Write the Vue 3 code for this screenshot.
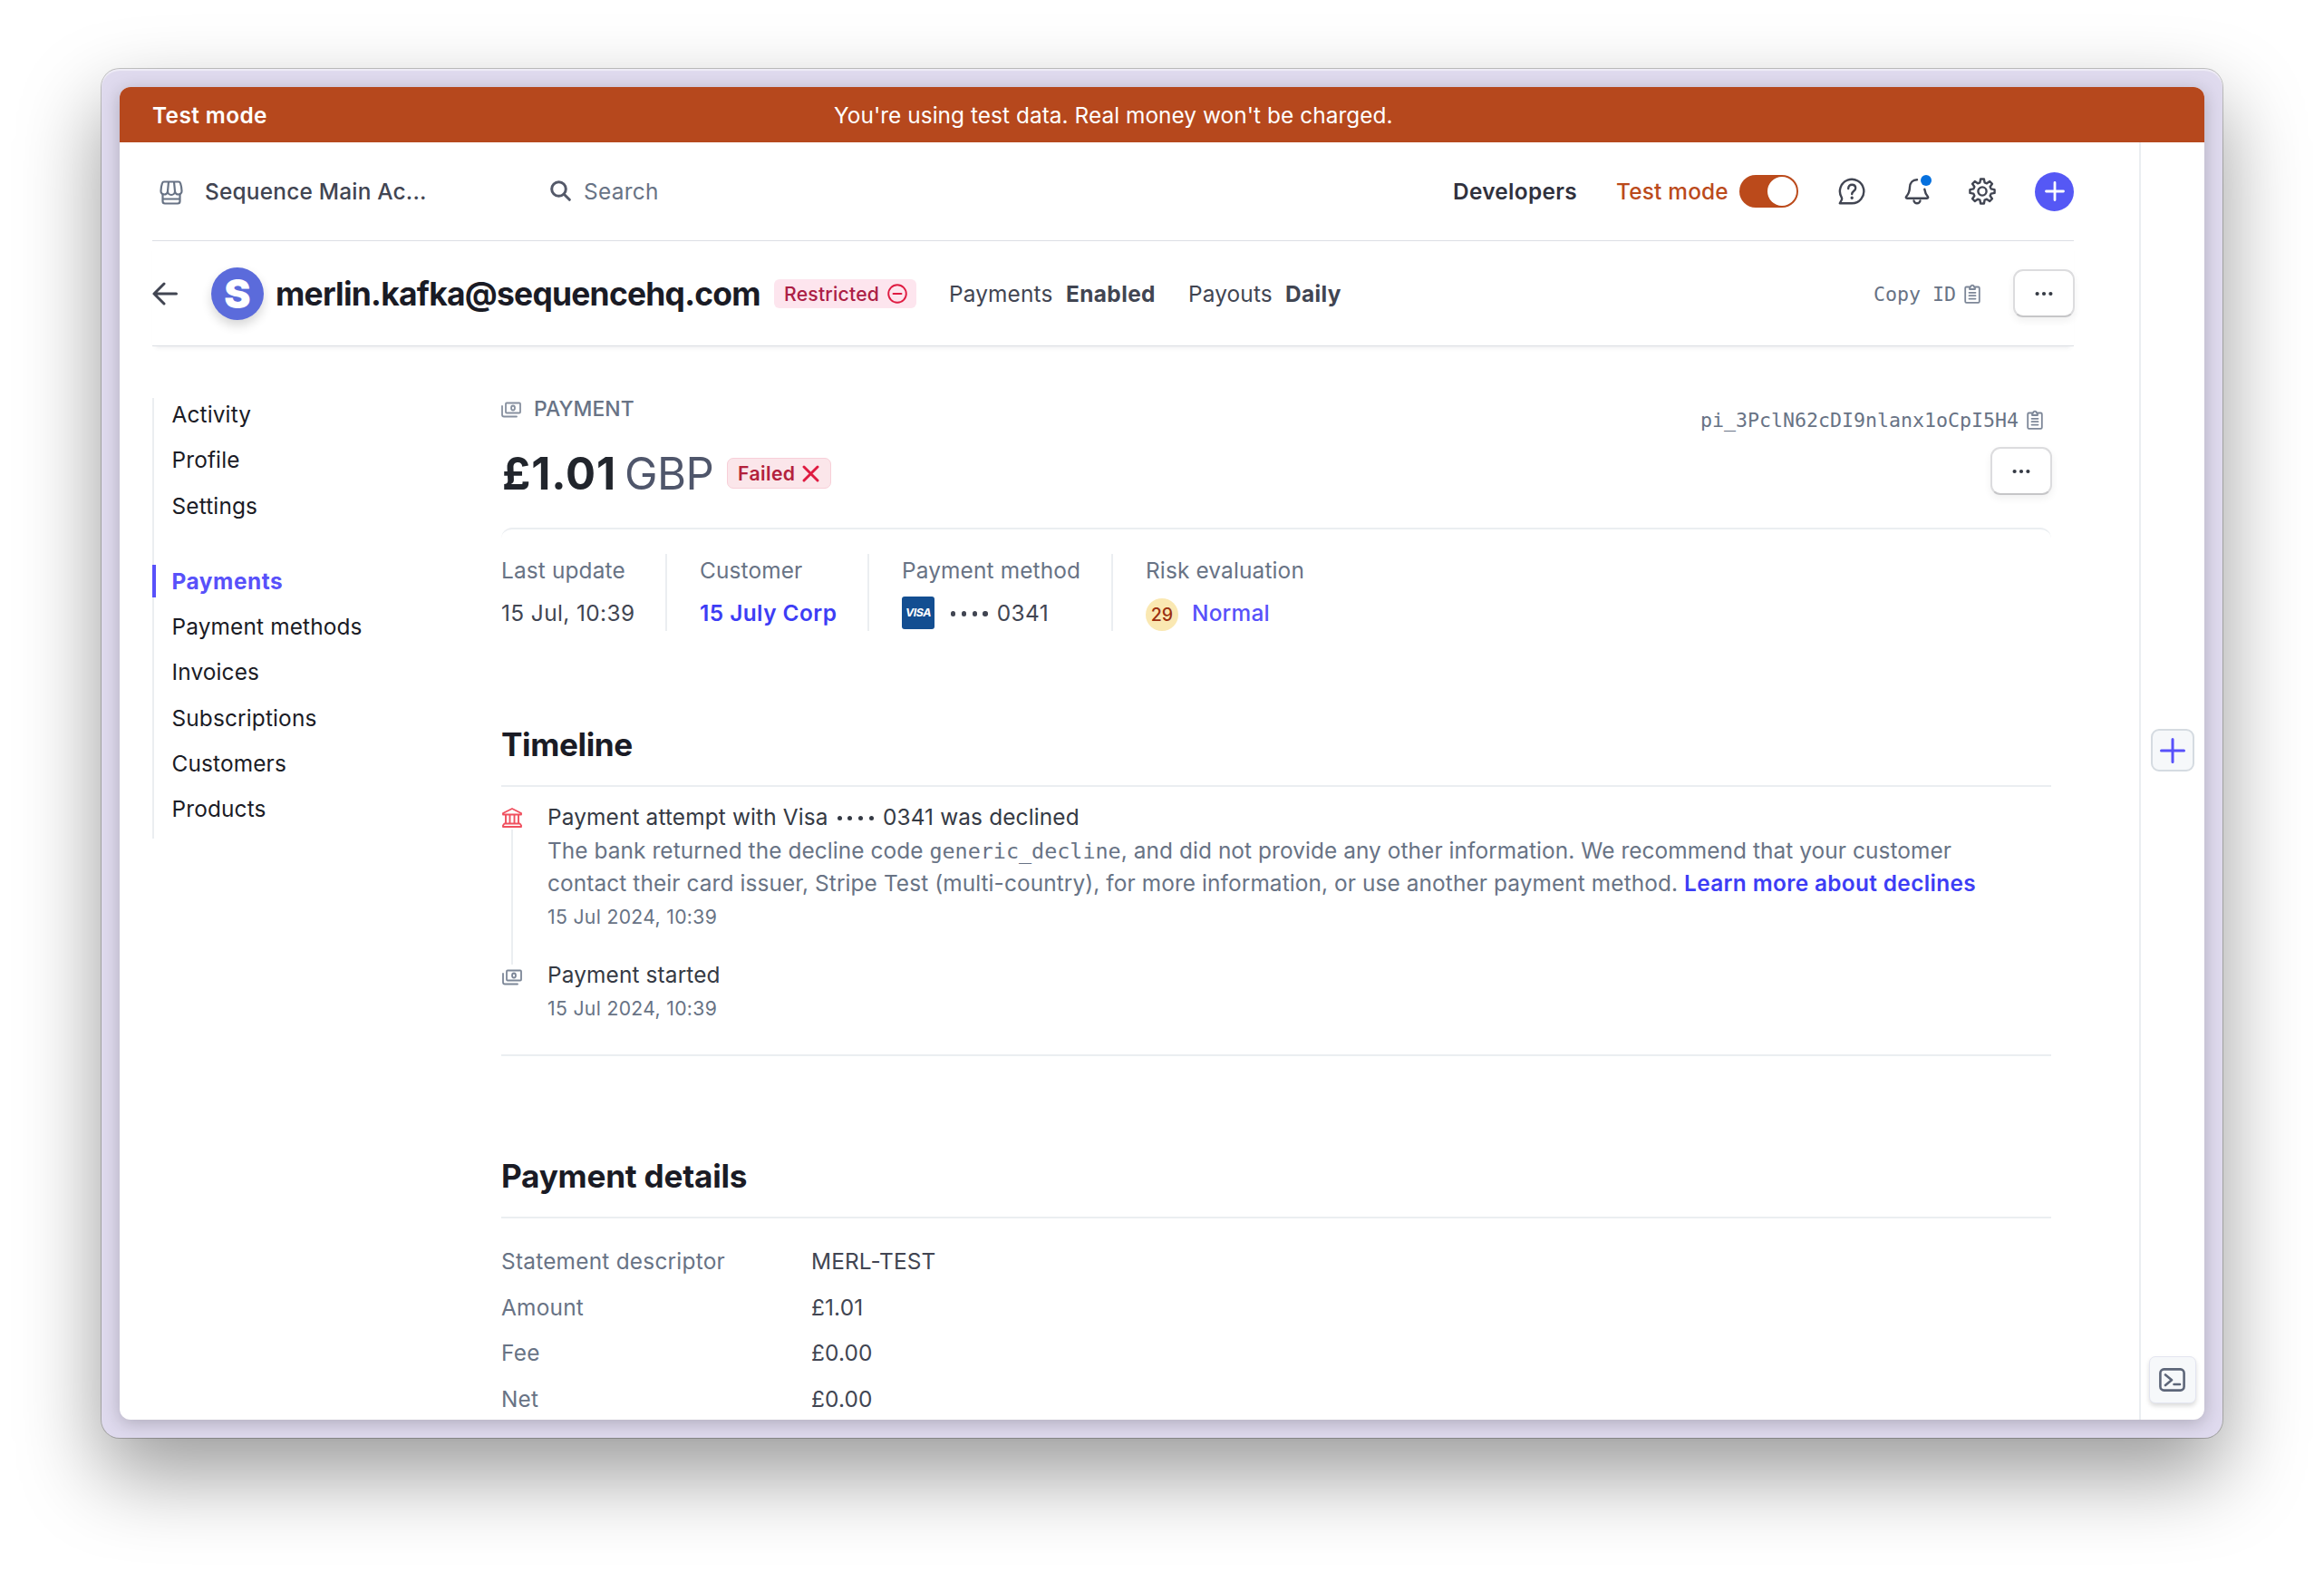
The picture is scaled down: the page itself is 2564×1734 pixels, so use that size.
<template>
  <div class="desktop">
    <div class="frame">
      <div class="window">
        <div class="banner">
          <span class="banner-mode">Test mode</span>
          <span class="banner-text">You're using test data. Real money won't be charged.</span>
        </div>

        <div class="body">
          <div class="page">
            <header class="topbar">
              <svg class="store-icon" viewBox="0 0 26 28" fill="none" stroke="#687385" stroke-width="2.2" stroke-linejoin="round">
                <path d="M5 2.500h16c1 0 1.700.500 2 1.500 1 3 1.500 6 1.500 8.500a3.500 3.500 0 0 1-7.500.500 4 4 0 0 1-8 0 3.500 3.500 0 0 1-7.500-.500C1.500 10 2 7 3 4c.3-1 1-1.500 2-1.500z" />
                <path d="M10 2.500L9 13M16 2.500L17 13" />
                <path d="M3.500 15.500V24a2.500 2.500 0 0 0 2.500 2.500h14a2.500 2.500 0 0 0 2.500-2.500v-8.500M3.500 21.500h19" />
              </svg>
              <span class="account">Sequence Main Ac...</span>
              <svg class="search-icon" viewBox="0 0 23 23" fill="none" stroke="#545969" stroke-width="3" stroke-linecap="round">
                <circle cx="9.500" cy="9.500" r="7.800" />
                <path d="M15.300 15.300l6 6" />
              </svg>
              <span class="search-text">Search</span>
              <span class="developers">Developers</span>
              <span class="mode-label">Test mode</span>
              <span class="toggle"><span class="knob"></span></span>
              <svg class="top-icon" viewBox="0 0 30 30" fill="none" stroke="#414552" stroke-width="2.400" stroke-linecap="round" stroke-linejoin="round">
                <path d="M1.800 28.200h13.400A13.200 13.200 0 1 0 3.800 21.800c.5.900.4 1.700 0 2.700z" />
                <path d="M11.200 12c0-2.600 1.700-4.200 4-4.200s4 1.500 4 3.700c0 3.300-4 3.300-4 6.500" />
                <circle cx="15.200" cy="22.200" r="1" fill="#414552" stroke-width="1.400" />
              </svg>
              <span class="bell">
                <svg class="bell-icon" viewBox="0 0 30 30" fill="none" stroke="#414552" stroke-width="2.400" stroke-linecap="round" stroke-linejoin="round">
                  <path d="M15 2.200C10.200 2.200 7.200 5.800 7 10.500c-.2 5-1.300 7.500-3.800 10.200-.8 1-.4 2 .8 2h22c1.200 0 1.600-1 .8-2-2-2.200-3-4.700-3.500-8" />
                  <path d="M11.500 25.500c.5 1.800 1.800 2.800 3.500 2.800s3-1 3.500-2.800" />
                </svg>
                <span class="bell-dot"></span>
              </span>
              <svg class="top-icon gear" viewBox="0 0 30 30" fill="none" stroke="#414552" stroke-width="2.400" stroke-linejoin="round">
                <path :d="gearPath" />
                <circle cx="15" cy="15" r="4.600" />
              </svg>
              <span class="create">
                <svg viewBox="0 0 22 22" stroke="#fff" stroke-width="2.800" stroke-linecap="round"><path d="M11 1.500v19M1.500 11h19" /></svg>
              </span>
            </header>

            <div class="account-bar">
              <svg class="back" viewBox="0 0 28 26" fill="none" stroke="#414552" stroke-width="3" stroke-linecap="round" stroke-linejoin="round">
                <path d="M26.500 13H2M13 2L2 13l11 11" />
              </svg>
              <span class="avatar">S</span>
              <h1 class="email">merlin.kafka@sequencehq.com</h1>
              <span class="restricted">
                Restricted
                <svg viewBox="0 0 22 22" fill="none" stroke="#df1b41" stroke-width="1.900" stroke-linecap="round">
                  <circle cx="11" cy="11" r="9.800" /><path d="M6.500 11h9" />
                </svg>
              </span>
              <span class="fact payments">Payments</span>
              <b class="fact enabled">Enabled</b>
              <span class="fact payouts">Payouts</span>
              <b class="fact daily">Daily</b>
              <span class="copy-id">
                Copy ID
                <svg class="clipboard" viewBox="0 0 18 22" fill="none" stroke="#7d8798" stroke-width="1.800" stroke-linecap="round" stroke-linejoin="round">
                  <path d="M5 3.500H2.500A1.300 1.300 0 0 0 1.200 4.800v14.700a1.300 1.300 0 0 0 1.300 1.300h13a1.300 1.300 0 0 0 1.300-1.300V4.800a1.300 1.300 0 0 0-1.300-1.300H13" />
                  <path d="M6 3.500h1.200a1.800 1.800 0 0 1 3.600 0H12V6H6zM5.500 9.800h7M5.500 13.200h7M5.500 16.600h7" />
                </svg>
              </span>
              <button class="more">
                <svg viewBox="0 0 20 6" fill="#353a44"><circle cx="2.600" cy="3" r="2.100" /><circle cx="10" cy="3" r="2.100" /><circle cx="17.400" cy="3" r="2.100" /></svg>
              </button>
            </div>

            <div class="columns">
              <nav class="sidebar">
                <ul v-for="(group, index) in navGroups" :key="index">
                  <li v-for="item in group" :key="item" :class="{ active: item === current }">
                    <span>{{ item }}</span>
                  </li>
                </ul>
              </nav>

              <main class="content">
                <div class="summary">
                  <div class="summary-left">
                    <div class="kind">
                      <svg class="cash" viewBox="0 0 22 18" fill="none" stroke="#87909f" stroke-width="1.800" stroke-linecap="round" stroke-linejoin="round">
                        <rect x="5" y="1.500" width="16" height="11" rx="1" />
                        <path d="M1 5v9.500a2 2 0 0 0 2 2h14" />
                        <ellipse cx="13" cy="7" rx="2" ry="2.500" />
                      </svg>
                      <span>PAYMENT</span>
                    </div>
                    <div class="amount-row">
                      <span class="amount">£1.01</span>
                      <span class="currency">GBP</span>
                      <span class="failed">
                        Failed
                        <svg viewBox="0 0 19 19" stroke="#df1b41" stroke-width="2.900" stroke-linecap="round"><path d="M2 2l15 15M17 2L2 17" /></svg>
                      </span>
                    </div>
                  </div>
                  <div class="summary-right">
                    <span class="payment-id">
                      pi_3PclN62cDI9nlanx1oCpI5H4
                      <svg class="clipboard" viewBox="0 0 18 22" fill="none" stroke="#7d8798" stroke-width="1.800" stroke-linecap="round" stroke-linejoin="round">
                        <path d="M5 3.500H2.500A1.300 1.300 0 0 0 1.200 4.800v14.700a1.300 1.300 0 0 0 1.300 1.300h13a1.300 1.300 0 0 0 1.300-1.300V4.800a1.300 1.300 0 0 0-1.300-1.300H13" />
                        <path d="M6 3.500h1.200a1.800 1.800 0 0 1 3.600 0H12V6H6zM5.500 9.800h7M5.500 13.200h7M5.500 16.600h7" />
                      </svg>
                    </span>
                    <button class="more">
                      <svg viewBox="0 0 20 6" fill="#353a44"><circle cx="2.600" cy="3" r="2.100" /><circle cx="10" cy="3" r="2.100" /><circle cx="17.400" cy="3" r="2.100" /></svg>
                    </button>
                  </div>
                </div>

                <div class="stats-edge"></div>
                <div class="stats">
                  <div class="stat">
                    <span class="label">Last update</span>
                    <span class="value"><span class="date-value">15 Jul, 10:39</span></span>
                  </div>
                  <div class="stat">
                    <span class="label">Customer</span>
                    <a class="value link customer">15 July Corp</a>
                  </div>
                  <div class="stat">
                    <span class="label">Payment method</span>
                    <span class="value">
                      <span class="visa">VISA</span>
                      <span class="dots"><i></i><i></i><i></i><i></i></span>
                      <span class="last4">0341</span>
                    </span>
                  </div>
                  <div class="stat">
                    <span class="label">Risk evaluation</span>
                    <span class="value">
                      <span class="risk">29</span>
                      <span class="normal">Normal</span>
                    </span>
                  </div>
                </div>

                <section class="timeline">
                  <h2>Timeline</h2>
                  <div class="event declined">
                    <div class="marker">
                      <svg class="bank" viewBox="0 0 22 22" fill="none" stroke="#f0505f" stroke-width="1.900" stroke-linejoin="round">
                        <path d="M1 7.500V6L11 1l10 5v1.500zM4 7.500v10M8.500 8v9.500M13.500 8v9.500M18 7.500v10M2.500 17.500h17M1 21h20v-1.500l-1.500-2h-17L1 19.500z" />
                      </svg>
                    </div>
                    <div class="event-body">
                      <div class="event-title attempt">Payment attempt with Visa <span class="dots small"><i></i><i></i><i></i><i></i></span> 0341 was declined</div>
                      <div class="event-text">The bank returned the decline code <code>generic_decline</code>, and did not provide any other information. We recommend that your customer</div>
                      <div class="event-text issuer">contact their card issuer, Stripe Test (multi-country), for more information, or use another payment method. <a class="link learn">Learn more about declines</a></div>
                      <div class="event-date">15 Jul 2024, 10:39</div>
                    </div>
                  </div>
                  <div class="event started">
                    <div class="marker">
                      <svg class="cash" viewBox="0 0 22 18" fill="none" stroke="#7d8798" stroke-width="1.800" stroke-linecap="round" stroke-linejoin="round">
                        <rect x="5" y="1.500" width="16" height="11" rx="1" />
                        <path d="M1 5v9.500a2 2 0 0 0 2 2h14" />
                        <ellipse cx="13" cy="7" rx="2" ry="2.500" />
                      </svg>
                    </div>
                    <div class="event-body">
                      <div class="event-title">Payment started</div>
                      <div class="event-date">15 Jul 2024, 10:39</div>
                    </div>
                  </div>
                </section>

                <section class="details">
                  <h2>Payment details</h2>
                  <dl>
                    <div v-for="row in details" :key="row.label" class="detail">
                      <dt>{{ row.label }}</dt>
                      <dd>{{ row.value }}</dd>
                    </div>
                  </dl>
                </section>
              </main>
            </div>
          </div>

          <aside class="rail">
            <button class="rail-add">
              <svg viewBox="0 0 28 28" stroke="#5851fa" stroke-width="3" stroke-linecap="round"><path d="M14 1.500v25M1.500 14h25" /></svg>
            </button>
            <button class="rail-shell">
              <svg viewBox="0 0 29 26" fill="none" stroke="#5d6679" stroke-width="2.600" stroke-linecap="round" stroke-linejoin="round">
                <rect x="1.400" y="1.400" width="26.200" height="23.200" rx="4" />
                <path d="M7 7.500l7 5.700L7 19M16.500 18h6.500" />
              </svg>
            </button>
          </aside>
        </div>
      </div>
    </div>
  </div>
</template>

<script setup>
import { ref } from 'vue'

const current = ref('Payments')

const navGroups = [
  ['Activity', 'Profile', 'Settings'],
  ['Payments', 'Payment methods', 'Invoices', 'Subscriptions', 'Customers', 'Products']
]

const details = [
  { label: 'Statement descriptor', value: 'MERL-TEST' },
  { label: 'Amount', value: '£1.01' },
  { label: 'Fee', value: '£0.00' },
  { label: 'Net', value: '£0.00' }
]

// eight teeth around the centre of a 30x30 box
function buildGear() {
  const points = []
  for (let i = 0; i < 8; i++) {
    const angle = i * 45
    const steps = [[-15, 10], [-8, 13.7], [8, 13.7], [15, 10]]
    steps.forEach(([offset, radius]) => {
      const rad = ((angle + offset) * Math.PI) / 180
      points.push(`${(15 + radius * Math.sin(rad)).toFixed(2)} ${(15 - radius * Math.cos(rad)).toFixed(2)}`)
    })
  }
  return `M${points.join('L')}Z`
}

const gearPath = buildGear()
</script>

<style>
body {
  margin: 0;
  background: #fff;
}
</style>

<style scoped>
.desktop {
  box-sizing: border-box;
  width: 2564px;
  height: 1734px;
  padding: 76px 112px 148px;
  overflow: hidden;
  background: #fff;
  font-family: Inter, "Liberation Sans", sans-serif;
  font-size: 24.4px;
  letter-spacing: 0.05px;
  color: #414552;
}

.desktop * {
  box-sizing: border-box;
}

.desktop svg {
  display: block;
  flex: none;
}

.frame {
  width: 2340px;
  height: 1510px;
  padding: 20px;
  border-radius: 20px;
  background: #dfdaee;
  box-shadow: 0 0 0 1px rgba(0, 0, 0, 0.22), 0 40px 90px rgba(0, 0, 0, 0.4), inset 0 2px 1px rgba(255, 255, 255, 0.5);
}

.window {
  display: flex;
  flex-direction: column;
  height: 1470px;
  overflow: hidden;
  border-radius: 12px;
  background: #fff;
  box-shadow: 0 4px 20px rgba(0, 0, 0, 0.22);
}

.banner {
  display: flex;
  flex: none;
  align-items: center;
  height: 61px;
  padding-left: 36px;
  background: #b6481d;
  color: #fff;
}

.banner-mode {
  width: 752px;
  font-weight: 600;
  letter-spacing: 0.4px;
}

.body {
  display: flex;
  flex: 1;
  min-height: 0;
}

.page {
  width: 2228px;
  padding: 0 72px 0 36px;
}

/* top bar */
.topbar {
  display: flex;
  align-items: center;
  height: 109px;
  border-bottom: 1px solid #dcdfe4;
  white-space: nowrap;
}

.store-icon {
  width: 26px;
  height: 28px;
  margin: 2px 0 0 8px;
}

.account {
  width: 381px;
  margin-left: 24px;
  font-weight: 550;
  letter-spacing: 0.22px;
}

.search-icon {
  width: 23px;
  height: 23px;
  margin: 0 14px 2px 0;
}

.search-text {
  width: 959px;
  letter-spacing: 0.3px;
  color: #687385;
}

.developers {
  width: 180px;
  font-weight: 570;
  letter-spacing: 0.3px;
  color: #30313d;
}

.mode-label {
  width: 136px;
  font-weight: 450;
  letter-spacing: 0.2px;
  color: #bb4a1b;
}

.toggle {
  width: 65px;
  height: 36px;
  padding: 2px;
  margin-right: 44px;
  border-radius: 18px;
  background: #bb4a1b;
}

.knob {
  display: block;
  width: 32px;
  height: 32px;
  margin-left: auto;
  border-radius: 50%;
  background: #fff;
}

.top-icon {
  width: 30px;
  height: 30px;
}

.bell {
  position: relative;
  width: 30px;
  height: 30px;
  margin-left: 42px;
}

.bell-icon {
  width: 30px;
  height: 30px;
}

.bell-dot {
  position: absolute;
  top: -3px;
  right: -1px;
  width: 12px;
  height: 12px;
  border-radius: 50%;
  background: #0570de;
}

.gear {
  margin: 0 43px 0 42px;
}

.create {
  display: flex;
  align-items: center;
  justify-content: center;
  width: 43px;
  height: 43px;
  border-radius: 50%;
  background: #5558f5;
}

.create svg {
  width: 22px;
  height: 22px;
}

/* connected account bar */
.account-bar {
  display: flex;
  align-items: center;
  height: 116px;
  border-bottom: 1px solid #dcdfe4;
  box-shadow: 0 5px 5px -4px rgba(60, 66, 87, 0.12);
  white-space: nowrap;
}

.back {
  width: 28px;
  height: 26px;
}

.avatar {
  display: flex;
  align-items: center;
  justify-content: center;
  width: 58px;
  height: 58px;
  margin-left: 37px;
  border-radius: 50%;
  background: #5b6bdb;
  box-shadow: 0 6px 12px rgba(0, 0, 0, 0.16);
  color: #fff;
  font-size: 44px;
  font-weight: 900;
}

.email {
  width: 550px;
  margin: 1px 0 0 13px;
  font-size: 35.4px;
  font-weight: 700;
  letter-spacing: -0.74px;
  color: #1a1b25;
}

.restricted {
  display: flex;
  align-items: center;
  justify-content: space-between;
  width: 157px;
  height: 32px;
  padding: 0 10px 0 11px;
  border-radius: 6px;
  background: #fde5ee;
  font-size: 21.2px;
  font-weight: 500;
  letter-spacing: 0.2px;
  color: #ac2045;
}

.restricted svg {
  width: 22px;
  height: 22px;
}

.fact {
  letter-spacing: 0.15px;
}

.fact.payments {
  width: 128px;
  margin-left: 36px;
}

.fact.enabled {
  width: 135px;
  margin-left: 1px;
  letter-spacing: 0.4px;
}

.fact.payouts {
  width: 106px;
}

.fact.daily {
  margin-left: 1px;
  letter-spacing: 0.4px;
}

.copy-id,
.payment-id {
  display: flex;
  align-items: center;
  gap: 9px;
  font-family: "DejaVu Sans Mono", monospace;
  font-size: 21.6px;
  letter-spacing: 0;
  color: #687385;
}

.copy-id {
  margin: 1px 0 0 auto;
}

.clipboard {
  width: 18px;
  height: 22px;
}

.more {
  display: flex;
  align-items: center;
  justify-content: center;
  width: 68px;
  height: 53px;
  padding: 0;
  border: 2px solid #dcdcde;
  border-bottom-color: #c6c6c8;
  border-radius: 11px;
  background: #fff;
  box-shadow: 0 4px 8px rgba(0, 0, 0, 0.06);
}

.more svg {
  width: 20px;
  height: 6px;
}

.account-bar .more {
  margin: 0 -1px 0 36px;
}

.columns {
  display: flex;
}

/* sidebar */
.sidebar {
  width: 385px;
  margin-top: 57px;
  letter-spacing: 0.15px;
  color: #1a1b25;
}

.sidebar ul {
  margin: 0;
  padding: 0 0 33px;
  border-left: 2px solid #ebeef1;
  list-style: none;
}

.sidebar ul:last-child {
  padding-bottom: 0;
}

.sidebar li {
  height: 50.3px;
}

.sidebar li span {
  display: block;
  height: 36px;
  margin-left: -2px;
  padding-left: 21.5px;
  line-height: 36px;
}

.sidebar .active span {
  padding-left: 17.5px;
  border-left: 4px solid #5851fa;
  font-weight: 650;
  letter-spacing: 0.55px;
  color: #5851fa;
}

/* payment summary */
.content {
  width: 1710px;
}

.summary {
  display: flex;
  justify-content: space-between;
  height: 200px;
}

.kind {
  display: flex;
  align-items: center;
  height: 30px;
  margin-top: 54px;
  font-size: 22.9px;
  font-weight: 450;
  color: #687385;
}

.cash {
  width: 22px;
  height: 18px;
  margin: 2px 14px 0 0;
}

.amount-row {
  display: flex;
  align-items: center;
  height: 60px;
  margin-top: 26px;
}

.amount {
  width: 136px;
  padding-left: 1px;
  font-size: 49px;
  font-weight: 700;
  letter-spacing: 0.9px;
  color: #21252c;
}

.currency {
  width: 113px;
  font-size: 49px;
  font-weight: 370;
  letter-spacing: -0.6px;
  color: #4f566b;
}

.failed {
  display: flex;
  align-items: center;
  justify-content: space-between;
  width: 115px;
  height: 34px;
  padding: 0 12px 0 11px;
  border: 1px solid #f8cfd8;
  border-radius: 7px;
  background: #fbe6ea;
  font-size: 21.2px;
  font-weight: 600;
  letter-spacing: 0.4px;
  color: #b3213c;
}

.failed svg {
  width: 19px;
  height: 19px;
}

.summary-right {
  display: flex;
  flex-direction: column;
  align-items: flex-end;
}

.payment-id {
  height: 30px;
  margin: 66px 9px 0 0;
}

.summary-right .more {
  margin: 15px -1px 0 0;
}

.stats-edge {
  height: 12px;
  border-top: 2px solid #ebeef1;
  border-radius: 12px 12px 0 0;
}

.stats {
  display: flex;
  margin-top: 17px;
}

.stat {
  height: 85px;
  padding-right: 35px;
  margin-right: 36px;
  border-right: 2px solid #ebeef1;
}

.stat:nth-child(1) {
  width: 183px;
}

.stat:nth-child(2) {
  width: 187px;
}

.stat:nth-child(3) {
  width: 233px;
}

.stat:last-child {
  border: 0;
}

.label {
  display: block;
  height: 37px;
  line-height: 37px;
  letter-spacing: 0.15px;
  color: #687385;
  white-space: nowrap;
}

.value {
  display: flex;
  align-items: center;
  height: 38px;
  margin-top: 9px;
  white-space: nowrap;
}

.date-value,
.last4 {
  letter-spacing: 0.4px;
}

.link {
  color: #3d3df5;
  font-weight: 600;
}

.customer {
  letter-spacing: 0.45px;
}

.learn {
  letter-spacing: 0.35px;
}

.visa {
  width: 36px;
  height: 36px;
  margin-right: 17px;
  border-radius: 3px;
  background: #134e91;
  color: #fff;
  font-size: 12.4px;
  font-style: italic;
  font-weight: 700;
  letter-spacing: -0.5px;
  line-height: 36px;
  text-align: center;
}

.dots {
  display: inline-flex;
  gap: 6.4px;
  margin: 2px 10px 0 1px;
}

.dots i {
  width: 5.4px;
  height: 5.4px;
  border-radius: 50%;
  background: currentColor;
}

.dots.small {
  gap: 6.8px;
  margin: 0 3px 0 3px;
  vertical-align: 5px;
}

.dots.small i {
  width: 5px;
  height: 5px;
}

.risk {
  width: 36px;
  height: 36px;
  margin: 3px 15px 0 0;
  border-radius: 50%;
  background: #fae8b2;
  color: #9b2f10;
  font-size: 19.6px;
  font-weight: 500;
  line-height: 37px;
  text-align: center;
}

.normal {
  font-weight: 450;
  letter-spacing: 0.2px;
  color: #5851fa;
}

/* timeline */
h2 {
  height: 80px;
  margin: 0;
  border-bottom: 2px solid #ebeef1;
  font-size: 35.2px;
  font-weight: 700;
  letter-spacing: -0.25px;
  line-height: 67px;
  color: #1a1b25;
}

.timeline {
  margin-top: 92px;
  border-bottom: 2px solid #ebeef1;
}

.timeline h2 {
  letter-spacing: -0.4px;
  line-height: 66px;
}

.event {
  display: flex;
  padding-top: 15px;
}

.declined {
  height: 174px;
}

.started {
  height: 121px;
}

.marker {
  display: flex;
  flex-direction: column;
  align-items: center;
  width: 24px;
  margin-right: 27px;
  padding-top: 8px;
}

.marker .cash {
  margin: 4px 0 0;
}

.bank {
  width: 22px;
  height: 22px;
}

.declined .marker::after {
  width: 2px;
  height: 149px;
  flex: none;
  margin-top: 2px;
  background: #ebeef1;
  content: "";
}

.event-title,
.event-text,
.event-date {
  height: 36.5px;
  line-height: 36.5px;
  white-space: nowrap;
}

.event-title {
  letter-spacing: 0.14px;
  color: #353a44;
}

.event-text {
  line-height: 36px;
  letter-spacing: 0.08px;
  color: #687385;
}

.event-text.issuer {
  letter-spacing: 0.1px;
}

.event-text code {
  font-family: "DejaVu Sans Mono", monospace;
  font-size: 23.4px;
  letter-spacing: 0;
}

.event-date {
  font-size: 21.2px;
  letter-spacing: 0.32px;
  color: #687385;
}

/* details */
.details {
  margin-top: 99px;
}

dl {
  margin: 29px 0 0;
}

.detail {
  display: flex;
  height: 50.5px;
  line-height: 36px;
}

dt {
  width: 342px;
  letter-spacing: 0.24px;
  color: #687385;
}

dd {
  margin: 0;
  letter-spacing: 0.15px;
}

/* right rail */
.rail {
  display: flex;
  flex-direction: column;
  align-items: center;
  width: 72px;
  border-left: 2px solid #ebeef1;
}

.rail-add,
.rail-shell {
  display: flex;
  align-items: center;
  justify-content: center;
  flex: none;
  padding: 0;
  background: #f6f8fa;
}

.rail-add {
  width: 48px;
  height: 47px;
  margin-top: 647px;
  margin-right: 1px;
  border: 2px solid #d5dbe1;
  border-radius: 9px;
}

.rail-add svg {
  width: 28px;
  height: 28px;
}

.rail-shell {
  width: 52px;
  height: 52px;
  margin-top: auto;
  margin-right: 1px;
  margin-bottom: 18px;
  border: 1px solid #e3e5f0;
  border-radius: 7px;
  box-shadow: 0 3px 5px rgba(0, 0, 0, 0.14);
}

.rail-shell svg {
  width: 29px;
  height: 26px;
}
</style>
